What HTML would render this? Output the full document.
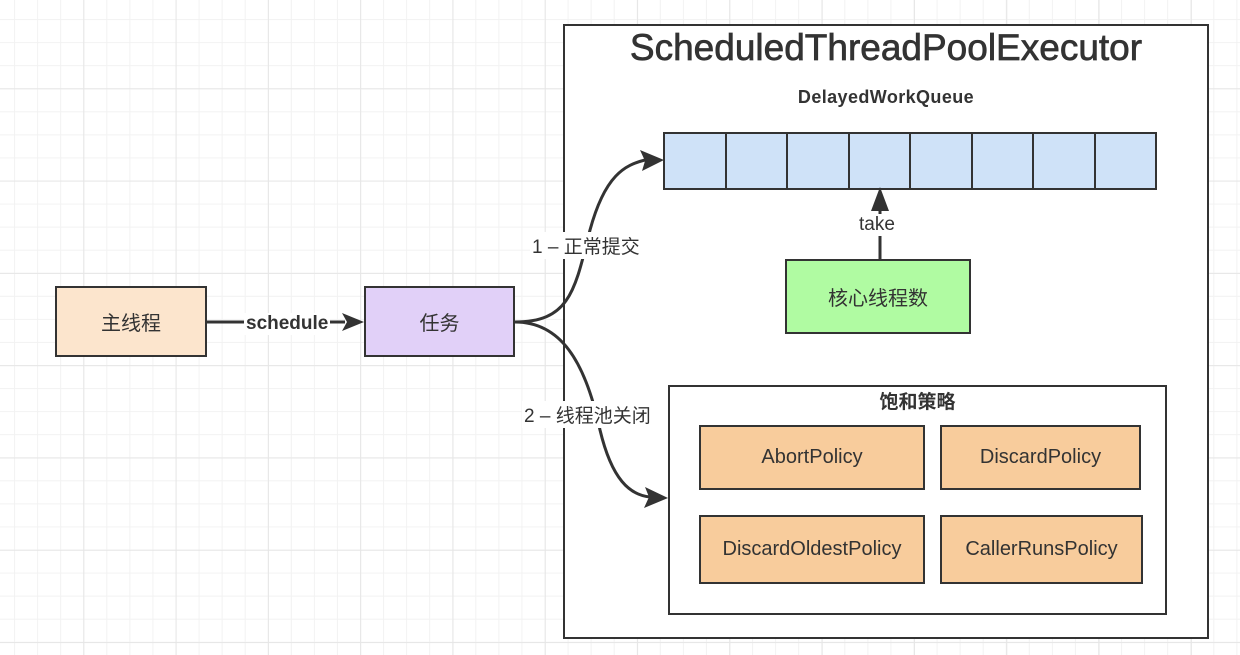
<!DOCTYPE html>
<html><head><meta charset="utf-8"><style>
html,body{margin:0;padding:0}
body{width:1240px;height:655px;position:relative;overflow:hidden;background-color:#fff;
background-image:
linear-gradient(to right,#e6e6e6 1px,transparent 1px),
linear-gradient(to bottom,#e6e6e6 1px,transparent 1px),
linear-gradient(to right,#f2f2f2 1px,transparent 1px),
linear-gradient(to bottom,#f2f2f2 1px,transparent 1px);
background-size:92.3px 92.3px,92.3px 92.3px,23.075px 23.075px,23.075px 23.075px;
background-position:-9px -4px,-9px -4px,-9px -4px,-9px -4px;
font-family:"Liberation Sans","Noto Sans CJK SC",sans-serif;color:#333}
.b{position:absolute;box-sizing:border-box;border:2.5px solid #333;display:flex;align-items:center;justify-content:center;font-size:20px}
.t{position:absolute;white-space:nowrap}
</style></head><body>
<div class="b" style="left:563px;top:24px;width:646px;height:615px;background:#fff;border-width:2.5px"></div>
<div class="t" style="left:564px;width:644px;top:27px;text-align:center;font-size:37px;-webkit-text-stroke:0.7px #333">ScheduledThreadPoolExecutor</div>
<div class="t" style="left:564px;width:644px;top:87px;text-align:center;font-size:18px;font-weight:bold;letter-spacing:0.4px">DelayedWorkQueue</div>
<div style="position:absolute;left:663px;top:132px;width:494px;height:58px;box-sizing:border-box;border:2.5px solid #333;background:#cfe2f8;display:flex">
<div style="flex:1;border-right:2.5px solid #333"></div><div style="flex:1;border-right:2.5px solid #333"></div><div style="flex:1;border-right:2.5px solid #333"></div><div style="flex:1;border-right:2.5px solid #333"></div><div style="flex:1;border-right:2.5px solid #333"></div><div style="flex:1;border-right:2.5px solid #333"></div><div style="flex:1;border-right:2.5px solid #333"></div><div style="flex:1"></div></div>
<div class="b" style="left:785px;top:259px;width:186px;height:75px;background:#b0fba2">核心线程数</div>
<div class="b" style="left:55px;top:286px;width:152px;height:71px;background:#fce5cd">主线程</div>
<div class="b" style="left:364px;top:286px;width:151px;height:71px;background:#e1d0f8">任务</div>
<div class="b" style="left:668px;top:385px;width:499px;height:230px;background:#fff"></div>
<div class="t" style="left:668px;width:499px;top:387px;text-align:center;font-size:19px;font-weight:bold">饱和策略</div>
<div class="b" style="left:699px;top:425px;width:226px;height:65px;background:#f8cc9c">AbortPolicy</div>
<div class="b" style="left:940px;top:425px;width:201px;height:65px;background:#f8cc9c">DiscardPolicy</div>
<div class="b" style="left:699px;top:515px;width:226px;height:69px;background:#f8cc9c">DiscardOldestPolicy</div>
<div class="b" style="left:940px;top:515px;width:203px;height:69px;background:#f8cc9c">CallerRunsPolicy</div>
<svg width="1240" height="655" style="position:absolute;left:0;top:0">
<g stroke="#333" stroke-width="3" fill="none">
<path d="M207 322H345"/>
<path d="M515 322C570 322 575 290 590 230C605 175 625 165 645 160"/>
<path d="M515 322C560 322 585 360 600 430C612 480 630 495 650 497"/>
<path d="M880 259V208"/>
</g>
<g fill="#333">
<path d="M364 322L342 313L347 322L342 331Z"/>
<path d="M664 160L640 150L645 161L642 171Z"/>
<path d="M668 498L645 487L649 497L644 508Z"/>
<path d="M880 187L871 211L889 211Z"/>
</g>
</svg>
<div class="t" style="left:244px;top:313px;font-size:19px;background:#fff;font-weight:bold;padding:0 2px">schedule</div>
<div class="t" style="left:530px;top:232px;font-size:19px;background:#fff;padding:0 2px">1 – 正常提交</div>
<div class="t" style="left:522px;top:401px;font-size:19px;background:#fff;padding:0 2px">2 – 线程池关闭</div>
<div class="t" style="left:857px;top:214px;font-size:19px;background:#fff;padding:0 2px">take</div>
</body></html>
